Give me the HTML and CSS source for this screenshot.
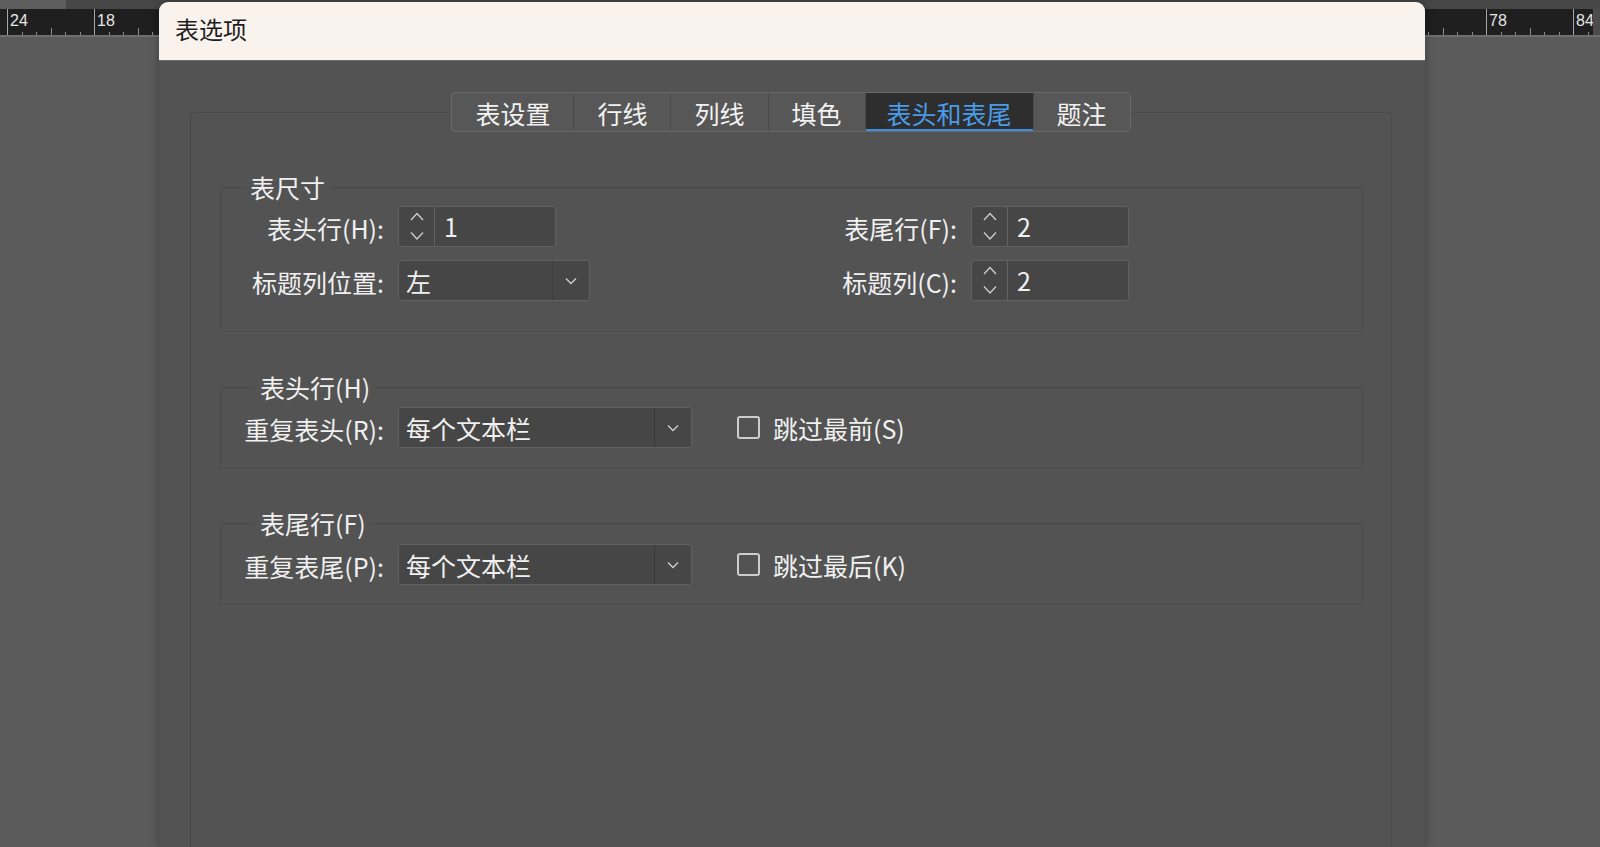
FILE: index.html
```html
<!DOCTYPE html>
<html lang="zh-CN">
<head>
    <meta charset="UTF-8">
    <title>表选项</title>
    <link rel="stylesheet" href="styles.css">
</head>
<body>
    <div class="topstrip">
        <div class="strip-left"></div>
    </div>

    <div class="ruler-row">
        <div class="ruler">
            <div class="seg"><span></span><div class="ticks"><i></i><i></i><i></i><i class="mid"></i><i></i><i></i></div></div>
            <div class="seg"><span>24</span><div class="ticks"><i></i><i></i><i></i><i class="mid"></i><i></i><i></i></div></div>
            <div class="seg"><span>18</span><div class="ticks"><i></i><i></i><i></i><i class="mid"></i><i></i><i></i></div></div>
            <div class="seg"><span></span><div class="ticks"><i></i><i></i><i></i><i class="mid"></i><i></i><i></i></div></div>
            <div class="seg"><span></span><div class="ticks"><i></i><i></i><i></i><i class="mid"></i><i></i><i></i></div></div>
            <div class="seg"><span></span><div class="ticks"><i></i><i></i><i></i><i class="mid"></i><i></i><i></i></div></div>
            <div class="seg"><span></span><div class="ticks"><i></i><i></i><i></i><i class="mid"></i><i></i><i></i></div></div>
            <div class="seg"><span></span><div class="ticks"><i></i><i></i><i></i><i class="mid"></i><i></i><i></i></div></div>
            <div class="seg"><span></span><div class="ticks"><i></i><i></i><i></i><i class="mid"></i><i></i><i></i></div></div>
            <div class="seg"><span></span><div class="ticks"><i></i><i></i><i></i><i class="mid"></i><i></i><i></i></div></div>
            <div class="seg"><span></span><div class="ticks"><i></i><i></i><i></i><i class="mid"></i><i></i><i></i></div></div>
            <div class="seg"><span></span><div class="ticks"><i></i><i></i><i></i><i class="mid"></i><i></i><i></i></div></div>
            <div class="seg"><span></span><div class="ticks"><i></i><i></i><i></i><i class="mid"></i><i></i><i></i></div></div>
            <div class="seg"><span></span><div class="ticks"><i></i><i></i><i></i><i class="mid"></i><i></i><i></i></div></div>
            <div class="seg"><span></span><div class="ticks"><i></i><i></i><i></i><i class="mid"></i><i></i><i></i></div></div>
            <div class="seg"><span></span><div class="ticks"><i></i><i></i><i></i><i class="mid"></i><i></i><i></i></div></div>
            <div class="seg"><span></span><div class="ticks"><i></i><i></i><i></i><i class="mid"></i><i></i><i></i></div></div>
            <div class="seg"><span></span><div class="ticks"><i></i><i></i><i></i><i class="mid"></i><i></i><i></i></div></div>
            <div class="seg"><span>78</span><div class="ticks"><i></i><i></i><i></i><i class="mid"></i><i></i><i></i></div></div>
            <div class="seg"><span>84</span><div class="ticks"><i></i><i></i><i></i><i class="mid"></i><i></i><i></i></div></div>
        </div>
        <div class="ruler-corner"></div>
    </div>

    <div class="workspace"></div>

    <div class="dialog">
        <div class="titlebar">表选项</div>

        <div class="dialog-body">
            <div class="tabs">
                <div class="tab">表设置</div>
                <div class="tab">行线</div>
                <div class="tab">列线</div>
                <div class="tab">填色</div>
                <div class="tab active">表头和表尾</div>
                <div class="tab">题注</div>
            </div>

            <div class="panel">
                <fieldset class="group group-size">
                    <legend>表尺寸</legend>
                    <div class="grid">
                        <label>表头行(H):</label>
                        <div class="spin">
                            <div class="spin-btn">
                                <svg width="16" height="39" viewBox="0 0 16 39"><path d="M2 13 L8 6.5 L14 13" /><path d="M2 25.5 L8 32 L14 25.5" /></svg>
                            </div>
                            <div class="spin-val">1</div>
                        </div>
                        <label>表尾行(F):</label>
                        <div class="spin">
                            <div class="spin-btn">
                                <svg width="16" height="39" viewBox="0 0 16 39"><path d="M2 13 L8 6.5 L14 13" /><path d="M2 25.5 L8 32 L14 25.5" /></svg>
                            </div>
                            <div class="spin-val">2</div>
                        </div>

                        <label>标题列位置:</label>
                        <div class="select select-short">
                            <div class="select-val">左</div>
                            <div class="select-arrow">
                                <svg width="12" height="8" viewBox="0 0 12 8"><path d="M1 1.5 L6 6.5 L11 1.5" /></svg>
                            </div>
                        </div>
                        <label>标题列(C):</label>
                        <div class="spin">
                            <div class="spin-btn">
                                <svg width="16" height="39" viewBox="0 0 16 39"><path d="M2 13 L8 6.5 L14 13" /><path d="M2 25.5 L8 32 L14 25.5" /></svg>
                            </div>
                            <div class="spin-val">2</div>
                        </div>
                    </div>
                </fieldset>

                <fieldset class="group group-header">
                    <legend>表头行(H)</legend>
                    <div class="line">
                        <label>重复表头(R):</label>
                        <div class="select select-long">
                            <div class="select-val">每个文本栏</div>
                            <div class="select-arrow">
                                <svg width="12" height="8" viewBox="0 0 12 8"><path d="M1 1.5 L6 6.5 L11 1.5" /></svg>
                            </div>
                        </div>
                        <div class="check">
                            <span class="box"></span>
                            <span>跳过最前(S)</span>
                        </div>
                    </div>
                </fieldset>

                <fieldset class="group group-footer">
                    <legend>表尾行(F)</legend>
                    <div class="line">
                        <label>重复表尾(P):</label>
                        <div class="select select-long">
                            <div class="select-val">每个文本栏</div>
                            <div class="select-arrow">
                                <svg width="12" height="8" viewBox="0 0 12 8"><path d="M1 1.5 L6 6.5 L11 1.5" /></svg>
                            </div>
                        </div>
                        <div class="check">
                            <span class="box"></span>
                            <span>跳过最后(K)</span>
                        </div>
                    </div>
                </fieldset>
            </div>
        </div>
    </div>
</body>
</html>
```

FILE: styles.css
```css
:root {
    --workspace: #5b5b5b;
    --dialog: #535353;
    --field: #464646;
    --field-border: #616161;
    --group-border: #494949;
    --text: #f0f0f0;
    --accent: #4b9ce8;
}

* {
    margin: 0;
    padding: 0;
    box-sizing: border-box;
}

body {
    width: 1600px;
    height: 847px;
    overflow: hidden;
    background-color: var(--workspace);
    font-family: "Noto Sans CJK SC", "Noto Sans", sans-serif;
    color: var(--text);
    position: relative;
}

/* barre du haut et règle */
.topstrip {
    height: 9px;
    background: #474747;
}

.strip-left {
    width: 66px;
    height: 9px;
    background: #5d5d5d;
}

.ruler-row {
    display: flex;
    height: 28px;
    border-bottom: 2px solid #6f6f6f;
}

.ruler {
    flex: 1;
    display: flex;
    overflow: hidden;
    background: #1f1f1f;
}

.ruler-corner {
    width: 7px;
    background: #4c4c4c;
}

.seg {
    flex: 0 0 87px;
    display: flex;
    flex-direction: column;
    justify-content: space-between;
    border-left: 1px solid #a5a5a5;
}

.seg:first-child {
    margin-left: -80px;
}

.seg span {
    font-family: "Liberation Sans", sans-serif;
    font-size: 16px;
    line-height: 19px;
    height: 19px;
    padding: 2px 0 0 2px;
    color: #e6e6e6;
}

.ticks {
    display: flex;
    align-items: flex-end;
    height: 7px;
}

.ticks i {
    flex: 1;
    height: 3px;
}

.ticks i + i {
    border-left: 1px solid #8e8e8e;
}

.ticks i.mid {
    height: 7px;
}

.workspace {
    height: 810px;
}

/* dialogue */
.dialog {
    position: absolute;
    left: 159px;
    top: 2px;
    width: 1266px;
    bottom: 0;
    background: var(--dialog);
    border-radius: 9px 9px 0 0;
    box-shadow: 0 0 8px rgba(0, 0, 0, 0.35);
}

.titlebar {
    height: 59px;
    padding-left: 16px;
    line-height: 54px;
    font-size: 24px;
    color: #1e1e1e;
    background: #faf3ed;
    border-radius: 9px 9px 0 0;
    border-bottom: 1px solid #6c6c6c;
}

.dialog-body {
    padding: 31px 33px 0 31px;
}

.tabs {
    position: relative;
    z-index: 1;
    display: flex;
    width: max-content;
    margin: 0 auto -20px;
    border: 1px solid #696969;
    border-radius: 4px;
    background: #575757;
    overflow: hidden;
}

.tab {
    height: 38px;
    padding: 0 23px;
    font-size: 25px;
    line-height: 41px;
    color: #f2f2f2;
}

.tab + .tab {
    border-left: 1px solid #4a4a4a;
}

.tab.active {
    padding: 0 21px;
    background: #2e2e2e;
    color: var(--accent);
    box-shadow: inset 0 -2px 0 #3d8ee0;
}

.panel {
    height: 760px;
    border: 1px solid #4a4a4a;
    border-radius: 3px;
    padding: 59px 28px 0 29px;
}

.group {
    border: 1px solid var(--group-border);
    border-radius: 3px;
    box-shadow: 0 1px 0 #5a5a5a;
}

.group legend {
    font-size: 25px;
    line-height: 30px;
    padding: 0 5px;
}

.group-size {
    padding: 4px 0 30px;
}

.group-size legend {
    margin-left: 24px;
}

.group-header {
    margin-top: 40px;
    padding: 5px 0 20px;
}

.group-footer {
    margin-top: 39px;
    padding: 6px 0 19px;
}

.group-header legend,
.group-footer legend {
    margin-left: 34px;
}

label {
    font-size: 25px;
    text-align: right;
    white-space: nowrap;
    padding-top: 3px;
}

.grid {
    display: grid;
    grid-template-columns: 163px 381px 164px auto;
    column-gap: 14px;
    row-gap: 13px;
    align-items: center;
}

.line {
    display: flex;
    align-items: center;
    gap: 14px;
}

.line label {
    width: 163px;
}

/* champs */
.spin {
    display: flex;
    width: 158px;
    height: 41px;
    background: var(--field);
    border: 1px solid var(--field-border);
    border-radius: 3px;
}

.spin-btn {
    width: 36px;
    display: flex;
    align-items: center;
    justify-content: center;
    border-right: 1px solid var(--field-border);
}

.spin-btn svg path,
.select-arrow svg path {
    fill: none;
    stroke: #cfcfcf;
    stroke-width: 1.3;
}

.spin-val {
    flex: 1;
    padding-left: 9px;
    font-size: 25px;
    line-height: 39px;
}

.select {
    display: flex;
    height: 41px;
    background: var(--field);
    border: 1px solid var(--field-border);
    border-radius: 3px;
}

.select-short {
    width: 192px;
}

.select-long {
    width: 294px;
}

.select-val {
    flex: 1;
    padding-left: 7px;
    font-size: 25px;
    line-height: 40px;
}

.select-arrow {
    width: 37px;
    display: flex;
    align-items: center;
    justify-content: center;
    border-left: 1px solid #3c3c3c;
}

.check {
    display: flex;
    align-items: center;
    gap: 13px;
    margin-left: 31px;
    font-size: 25px;
}

.check .box {
    width: 23px;
    height: 23px;
    border: 2px solid #cdcdcd;
    border-radius: 3px;
}
```
